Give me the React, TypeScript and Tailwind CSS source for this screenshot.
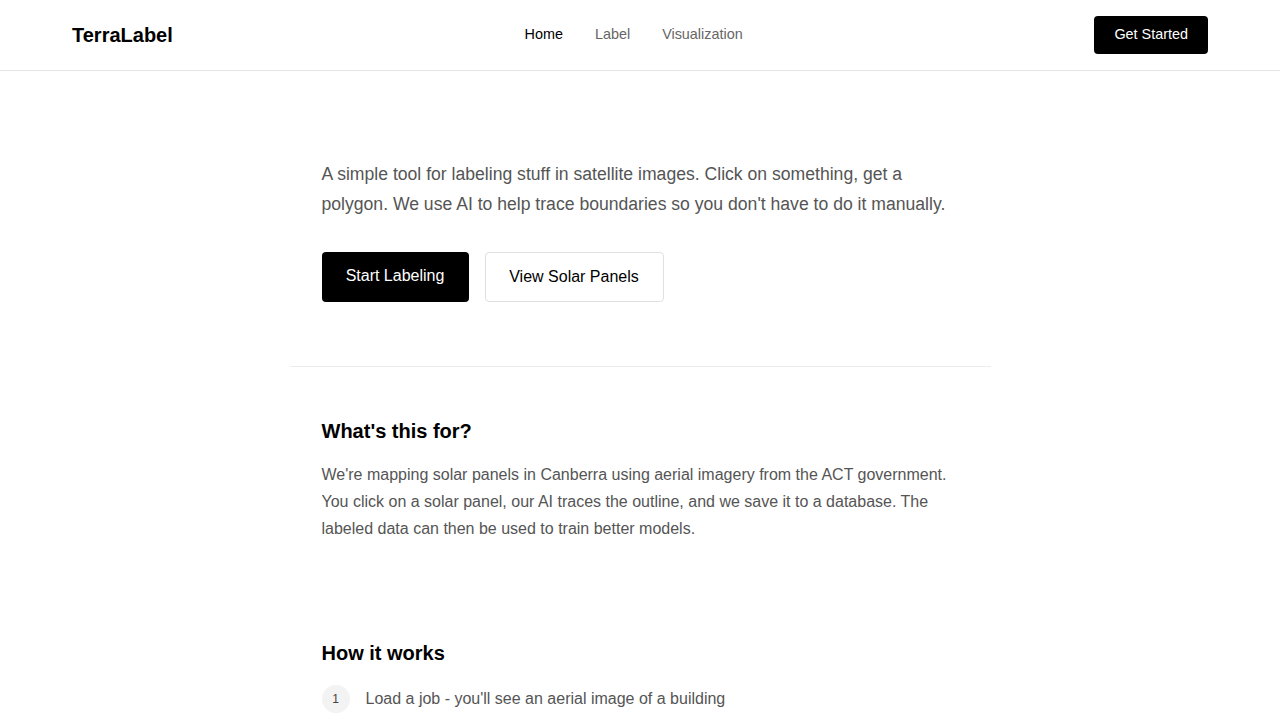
function Header() {
  return (
    <header className="h-[71px] border-b border-[#e5e5e5] bg-white">
      <div className="flex h-[70px] items-center justify-between px-[72px]">
        <div className="text-[20px] font-bold text-black">TerraLabel</div>
        <nav className="flex items-center gap-8 text-[0.9rem]">
          <a className="text-black">Home</a>
          <a className="text-[#666]">Label</a>
          <a className="text-[#666]">Visualization</a>
        </nav>
        <button className="h-[38px] rounded-[4px] bg-black px-5 text-[0.9rem] text-white">Get Started</button>
      </div>
    </header>
  );
}

const steps = [
  "Load a job - you'll see an aerial image of a building",
  'Click on a solar panel and the AI traces its outline',
  'Adjust the polygon if needed, then save it',
];

export default function App() {
  return (
    <div className="min-h-screen bg-white font-['Liberation_Sans',Arial,sans-serif]">
      <Header />
      <main className="mx-auto max-w-[701px]">
        <section className="px-8 pt-[88px] pb-16">
          <p className="text-[1.1rem] leading-[30px] text-[#555]">
            A simple tool for labeling stuff in satellite images. Click on something, get a polygon. We use AI to help
            trace boundaries so you don't have to do it manually.
          </p>
          <div className="mt-[33px] flex gap-4">
            <button className="h-[50px] w-[147px] rounded-[4px] bg-black pb-[2px] text-[16px] text-white">Start Labeling</button>
            <button className="h-[50px] w-[179px] rounded-[4px] border border-[#e0e0e0] bg-white text-[16px] text-black">
              View Solar Panels
            </button>
          </div>
        </section>
        <section className="border-t border-[#ececec] px-8 pt-[50px] pb-[97px]">
          <h2 className="text-[20px] font-bold leading-[28px] text-black">What's this for?</h2>
          <p className="mt-[16px] text-[16px] leading-[27px] text-[#555]">
            We're mapping solar panels in Canberra using aerial imagery from the ACT government. You click on a solar
            panel, our AI traces the outline, and we save it to a database. The labeled data can then be used to train
            better models.
          </p>
        </section>
        <section className="px-8 pb-16">
          <h2 className="text-[20px] font-bold leading-[28px] text-black">How it works</h2>
          <ol className="mt-[18px] flex flex-col gap-8">
            {steps.map((s, i) => (
              <li key={i} className="flex items-center gap-4">
                <span className="flex h-[28px] w-[28px] shrink-0 items-center justify-center rounded-full bg-[#f3f3f3] text-[12px] text-[#444]">
                  {i + 1}
                </span>
                <span className="text-[16px] text-[#555]">{s}</span>
              </li>
            ))}
          </ol>
        </section>
      </main>
    </div>
  );
}
